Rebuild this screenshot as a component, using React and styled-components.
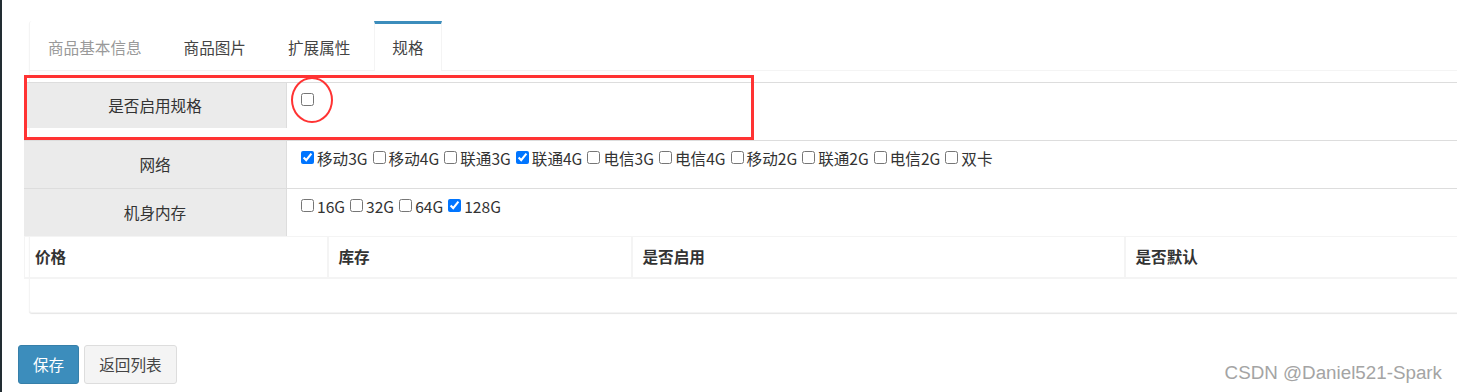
import React from 'react';
import styled, { createGlobalStyle, css } from 'styled-components';

const GlobalStyle = createGlobalStyle`
  html, body {
    margin: 0;
    padding: 0;
    background: #fff;
  }
  body {
    font-family: "Noto Sans CJK SC", "Liberation Sans", sans-serif;
    font-size: 15.6px;
    color: #333;
  }
`;

const BLUE = '#3c8dbc';
const LINE = '#f4f4f4';

const Page = styled.div`
  position: relative;
  height: 392px;
  overflow: hidden;
  border-left: 2px solid #222d32;
`;

const TabBox = styled.div`
  width: 1440px;
  margin: 21px 0 0 27px;
  height: 292px;
  box-sizing: border-box;
  border: 1px solid ${LINE};
  border-top: 0;
  border-radius: 3px;
  box-shadow: 0 1px 1px rgba(0, 0, 0, 0.1);
  background: #fff;
`;

const TabList = styled.ul`
  display: flex;
  list-style: none;
  margin: 0;
  padding: 0;
  height: 49px;
  border-bottom: 1px solid ${LINE};
`;

const Tab = styled.li`
  height: 49px;
  box-sizing: border-box;
  padding: 0 17px 1px;
  margin-right: 6px;
  display: flex;
  align-items: center;
  border: 1px solid transparent;
  border-top: 3px solid transparent;
  border-bottom: 0;
  color: ${(p) => (p.$muted ? '#999' : '#444')};
  white-space: nowrap;
  ${(p) => p.$active && css`
    border-color: ${LINE};
    border-top-color: ${BLUE};
    background: #fff;
    height: 50px;
    padding-bottom: 2px;
  `}
`;

const TabContent = styled.div`
  padding-top: 11px;
  margin-left: -6px;
`;

const SpecRow = styled.div`
  position: relative;
  display: flex;
  border-top: 1px solid #ddd;
  height: ${(p) => p.$height}px;
`;

const LabelCell = styled.div`
  width: 263px;
  height: ${(p) => p.$height}px;
  box-sizing: border-box;
  padding-bottom: 2px;
  flex-shrink: 0;
  display: flex;
  align-items: center;
  justify-content: center;
  background: #ebebeb;
  border-right: 1px solid #ddd;
  color: #333;
`;

const ValueCell = styled.div`
  padding: 5px 0 0 14px;
  line-height: 22px;
  white-space: nowrap;
`;

const Option = styled.label`
  display: inline-flex;
  align-items: center;
  margin-right: 5px;
  color: #333;
`;

const Check = styled.input.attrs({ type: 'checkbox' })`
  width: 13px;
  height: 13px;
  margin: 0 3px 0 0;
`;

const Highlight = styled.div`
  position: absolute;
  left: 0;
  top: -8px;
  width: 730px;
  height: 65px;
  box-sizing: border-box;
  border: 3px solid #f33;
  pointer-events: none;
`;

const Ring = styled.div`
  position: absolute;
  left: 267px;
  top: -6px;
  width: 42px;
  height: 46px;
  box-sizing: border-box;
  border: 2px solid #f33;
  border-radius: 50%;
  pointer-events: none;
`;

const SkuTable = styled.table`
  border-collapse: collapse;
  width: 1440px;
  border-top: 1px solid ${LINE};
  border-left: 1px solid ${LINE};
`;

const HeadCell = styled.th`
  width: ${(p) => (p.$width ? `${p.$width}px` : 'auto')};
  height: 41px;
  padding: 0 0 2px 10px;
  text-align: left;
  font-weight: bold;
  color: #333;
  border-right: 2px solid ${LINE};
  border-bottom: 2px solid ${LINE};
  box-sizing: border-box;
`;

const Actions = styled.div`
  display: flex;
  gap: 5px;
  margin: 32px 0 0 16px;
`;

const Button = styled.button`
  height: 39px;
  padding: 0 14px 1px;
  border-radius: 3px;
  font-family: inherit;
  font-size: 15.6px;
  border: 1px solid ${(p) => (p.$primary ? '#367fa9' : '#ddd')};
  background: ${(p) => (p.$primary ? BLUE : '#f4f4f4')};
  color: ${(p) => (p.$primary ? '#fff' : '#444')};
`;

const Watermark = styled.div`
  position: absolute;
  right: 15px;
  bottom: 8px;
  font-family: "Liberation Sans", Arial, sans-serif;
  font-size: 18.8px;
  color: #a4a4a4;
  pointer-events: none;
`;

const tabs = ['商品基本信息', '商品图片', '扩展属性', '规格'];

const networks = [
  ['移动3G', true], ['移动4G', false], ['联通3G', false], ['联通4G', true],
  ['电信3G', false], ['电信4G', false], ['移动2G', false], ['联通2G', false],
  ['电信2G', false], ['双卡', false],
];

const memory = [['16G', false], ['32G', false], ['64G', false], ['128G', true]];

const Options = ({ items }) => (
  <ValueCell>
    {items.map(([text, checked]) => (
      <Option key={text}>
        <Check defaultChecked={checked} />
        {text}
      </Option>
    ))}
  </ValueCell>
);

export default function App() {
  return (
    <>
      <GlobalStyle />
      <Page>
        <TabBox>
          <TabList>
            {tabs.map((t, i) => (
              <Tab key={t} $muted={i === 0} $active={i === tabs.length - 1}>{t}</Tab>
            ))}
          </TabList>
          <TabContent>
            <SpecRow $height={57}>
              <LabelCell $height={45}>是否启用规格</LabelCell>
              <ValueCell>
                <Check />
              </ValueCell>
              <Highlight />
              <Ring />
            </SpecRow>
            <SpecRow $height={47}>
              <LabelCell $height={47}>网络</LabelCell>
              <Options items={networks} />
            </SpecRow>
            <SpecRow $height={47}>
              <LabelCell $height={47}>机身内存</LabelCell>
              <Options items={memory} />
            </SpecRow>
            <SkuTable>
              <thead>
                <tr>
                  <HeadCell $width={303}>价格</HeadCell>
                  <HeadCell $width={304}>库存</HeadCell>
                  <HeadCell $width={493}>是否启用</HeadCell>
                  <HeadCell>是否默认</HeadCell>
                </tr>
              </thead>
            </SkuTable>
          </TabContent>
        </TabBox>
        <Actions>
          <Button $primary>保存</Button>
          <Button>返回列表</Button>
        </Actions>
        <Watermark>CSDN @Daniel521-Spark</Watermark>
      </Page>
    </>
  );
}
